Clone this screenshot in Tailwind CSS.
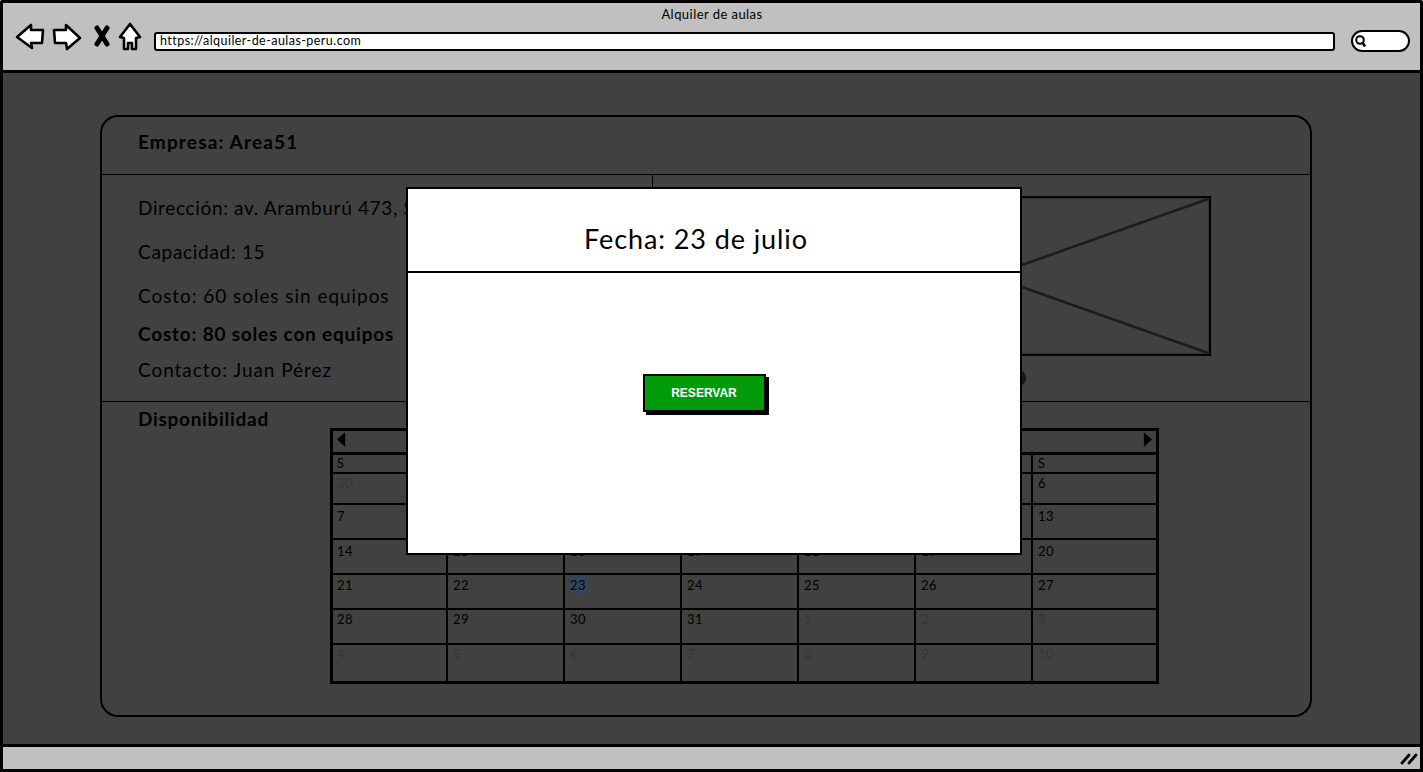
<!DOCTYPE html>
<html lang="es">
<head>
    <meta charset="UTF-8">
    <title>Alquiler de aulas</title>
    <script src="https://cdn.jsdelivr.net/npm/@tailwindcss/browser@4"></script>
</head>
<body class="bg-white">
    <div class="relative w-[1423px] h-[772px] overflow-hidden flex flex-col font-['Lato','Noto_Sans',sans-serif] text-black">
        <!-- barra del navegador -->
        <header class="h-[73px] shrink-0 bg-[#c0c0c0] border-[3px] border-black rounded-t-[2px]">
            <p class="text-center text-[13px] leading-4 pt-[3px] tracking-[0.45px] pl-[1px]">Alquiler de aulas</p>
            <div class="flex items-start">
                <svg class="w-[150px] h-[34px] shrink-0" viewBox="0 0 150 34">
                    <g transform="translate(-3,-22)" fill="#fff" stroke="#000" stroke-width="2.6" stroke-linejoin="round">
                        <path d="M17 37 L31 25 L31 30 L43 30 L42 43 L31 43 L32 48 Z"/>
                        <path d="M54 30 L66 30 L66 25 L80 38 L67 49 L66 43 L55 43 Z"/>
                        <path d="M97 28 L107 44 M107 28 L97 44" stroke-width="5" fill="none" stroke-linecap="round"/>
                        <path d="M130 24 L140 37 L136 38 L136 49 L132 49 L132 43 L128 43 L128 49 L124 49 L124 38 L120 37 Z"/>
                    </g>
                </svg>
                <div class="ml-[1px] mt-[10px] w-[1181px] h-[19px] bg-white border-2 border-black rounded-[3px] pl-[4px] text-[12.5px] leading-[14px] tracking-[0.45px]">https://alquiler-de-aulas-peru.com</div>
                <div class="ml-[16px] mt-[8px] w-[59px] h-[22px] bg-white border-2 border-black rounded-[11px] flex items-center pl-[1px]">
                    <svg class="w-[14px] h-[14px]" viewBox="0 0 14 14" fill="none" stroke="#000">
                        <circle cx="6" cy="6" r="3.8" stroke-width="2"/>
                        <path d="M8.8 9 L11 12.5" stroke-width="2.4"/>
                    </svg>
                </div>
            </div>
        </header>

        <!-- contenido bajo el modal -->
        <main class="flex-1 bg-[#414141] border-x-[3px] border-black pt-[42px] pl-[97px]">
            <section class="w-[1212px] h-[602px] border-2 border-black rounded-[18px] flex flex-col">
                <div class="h-[58px] shrink-0 border-b border-black pl-[36px] pt-[13px] text-[19px] leading-[24px] font-bold tracking-[1.15px]">Empresa: Area51</div>
                <div class="h-[227px] shrink-0 flex border-b border-black">
                    <div class="w-[551px] border-r border-black pl-[36px] pt-[21px] text-[19px] leading-[24px] tracking-[0.95px]">
                        <p class="whitespace-nowrap tracking-[0.65px]">Dirección: av. Aramburú 473, San Isidro</p>
                        <p class="mt-[20px] tracking-[0.7px]">Capacidad: 15</p>
                        <p class="mt-[20px]">Costo: 60 soles sin equipos</p>
                        <p class="mt-[14px] font-bold tracking-[0.8px]">Costo: 80 soles con equipos</p>
                        <p class="mt-[12px]">Contacto: Juan Pérez</p>
                    </div>
                    <div class="flex-1 pl-[118px] pt-[21px]">
                        <svg class="w-[440px] h-[160px] block" viewBox="0 0 440 160" fill="none" stroke="#000">
                            <rect x="1" y="1" width="438" height="158" stroke-width="2.5"/>
                            <path d="M3 3 L437 157 M437 3 L3 157" stroke="#1c1c1c" stroke-width="2.5"/>
                        </svg>
                        <div class="ml-[237px] mt-[13px] w-[18px] h-[18px] rounded-full bg-[#111a24]"></div>
                    </div>
                </div>
                <div class="pl-[36px] pt-[5px] text-[19px] leading-[24px] font-bold tracking-[0.7px]">Disponibilidad</div>
                <div id="calendar" class="ml-[228px] mt-[-3px] w-[829px] h-[256px] border-[3px] border-black grid grid-cols-[113px_117px_117px_117px_117px_117px_1fr] grid-rows-[24px_17px_31px_35px_35px_35px_35px_1fr] text-[13px] leading-4 tracking-[0.4px]"></div>
            </section>
        </main>

        <!-- barra de estado -->
        <footer class="h-[28px] shrink-0 bg-[#c0c0c0] border-[3px] border-black flex items-center justify-end pr-[2px]">
            <svg class="w-[18px] h-[14px]" viewBox="0 0 18 14" stroke="#000" stroke-width="2.8" stroke-linecap="round">
                <path d="M2 12 L9 4 M9 12 L16 4"/>
            </svg>
        </footer>

        <!-- modal -->
        <div class="absolute left-[406px] top-[187px] w-[616px] h-[368px] bg-white border-2 border-black flex flex-col">
            <div class="h-[84px] shrink-0 border-b-2 border-black flex items-center justify-center pr-[36px] pt-[18px] text-[27px] leading-8 tracking-[0.9px]">Fecha: 23 de julio</div>
            <div class="flex-1 flex justify-center pt-[101px] pr-[20px]">
                <button class="w-[123px] h-[38px] bg-[#009b0b] border-2 border-black shadow-[3px_3px_0_#000] text-white text-[12px] font-bold font-['Liberation_Sans',sans-serif]">RESERVAR</button>
            </div>
        </div>
    </div>

    <script>
        // calendario de julio 2019
        const calendar = document.getElementById('calendar');
        const days = ['S', 'M', 'T', 'W', 'T', 'F', 'S'];
        const dates = [30, 1, 2, 3, 4, 5, 6, 7, 8, 9, 10, 11, 12, 13, 14, 15, 16, 17, 18, 19, 20, 21, 22, 23, 24, 25, 26, 27, 28, 29, 30, 31, 1, 2, 3, 4, 5, 6, 7, 8, 9, 10];

        let html = `
            <div class="col-span-7 flex items-center justify-between px-[4px] pb-[4px] border-b-[3px] border-black">
                <svg class="w-[9px] h-[15px]" viewBox="0 0 10 16"><path d="M9 0 L0 8 L9 16 Z" fill="#000"/></svg>
                <span class="text-[14px]">July 2019</span>
                <svg class="w-[9px] h-[15px]" viewBox="0 0 10 16"><path d="M1 0 L10 8 L1 16 Z" fill="#000"/></svg>
            </div>`;

        days.forEach((day, i) => {
            const left = i === 0 ? 'px-[4px]' : 'border-l-2 border-black px-[5px]';
            html += `<div class="${left} pt-[1px] text-[12.5px] leading-4">${day}</div>`;
        });

        dates.forEach((date, i) => {
            const left = i % 7 === 0 ? 'px-[4px]' : 'border-l-2 px-[5px]';
            const muted = i === 0 || i > 31;
            const today = i === 23;
            // las filas del boceto no tienen el texto a la misma altura
            const top = i < 7 ? 'pt-[1px]' : i < 14 ? 'pt-[3px]' : i < 21 ? 'pt-[3px]' : i < 28 ? 'pt-[2px]' : 'pt-[1px]';
            html += `<div class="${left} border-t-2 border-black ${top} ${muted ? 'text-[#363636]' : ''}">
                <span class="${today ? 'flex items-center justify-center w-[20px] h-[20px] rounded-full bg-[#34465f] -mx-[2px] -my-[2px]' : ''}">${date}</span>
            </div>`;
        });

        calendar.innerHTML = html;
    </script>
</body>
</html>
